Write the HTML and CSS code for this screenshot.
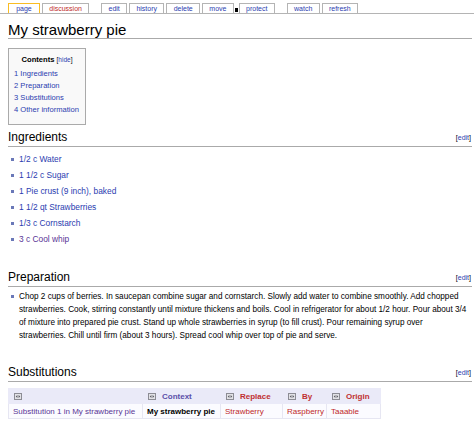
FILE: index.html
```html
<!DOCTYPE html>
<html lang="en">
<head>
    <meta charset="UTF-8">
    <title>My strawberry pie</title>
    <link rel="stylesheet" href="styles.css">
</head>
<body>
    <ul class="tabs">
        <li class="tab selected"><a href="#">page</a></li>
        <li class="tab gap"><a href="#" class="new">discussion</a></li>
        <li class="tab"><a href="#">edit</a></li>
        <li class="tab"><a href="#">history</a></li>
        <li class="tab"><a href="#">delete</a></li>
        <li class="tab"><a href="#">move</a></li>
        <li class="tab-mark"></li>
        <li class="tab gap"><a href="#">protect</a></li>
        <li class="tab"><a href="#">watch</a></li>
        <li class="tab"><a href="#">refresh</a></li>
    </ul>
    <div class="content">
        <h1>My strawberry pie</h1>
        <div class="toc">
            <div class="toc-title">Contents <span class="toc-toggle">[<a href="#">hide</a>]</span></div>
            <ul>
                <li><a href="#ingredients">1 Ingredients</a></li>
                <li><a href="#preparation">2 Preparation</a></li>
                <li><a href="#substitutions">3 Substitutions</a></li>
                <li><a href="#other">4 Other information</a></li>
            </ul>
        </div>

        <h2 id="ingredients" class="first"><span class="editsection">[<a href="#">edit</a>]</span>Ingredients</h2>
        <ul class="items">
            <li><a href="#">1/2 c Water</a></li>
            <li><a href="#">1 1/2 c Sugar</a></li>
            <li><a href="#">1 Pie crust (9 inch), baked</a></li>
            <li><a href="#">1 1/2 qt Strawberries</a></li>
            <li><a href="#">1/3 c Cornstarch</a></li>
            <li><a href="#" class="visited">3 c Cool whip</a></li>
        </ul>

        <h2 id="preparation"><span class="editsection">[<a href="#">edit</a>]</span>Preparation</h2>
        <ul class="steps">
            <li>Chop 2 cups of berries. In saucepan combine sugar and cornstarch. Slowly add water to combine smoothly. Add chopped strawberries. Cook, stirring constantly until mixture thickens and boils. Cool in refrigerator for about 1/2 hour. Pour about 3/4 of mixture into prepared pie crust. Stand up whole strawberries in syrup (to fill crust). Pour remaining syrup over strawberries. Chill until firm (about 3 hours). Spread cool whip over top of pie and serve.</li>
        </ul>

        <h2 id="substitutions"><span class="editsection">[<a href="#">edit</a>]</span>Substitutions</h2>
        <table class="subs">
            <colgroup>
                <col class="c1"><col class="c2"><col class="c3"><col class="c4"><col class="c5">
            </colgroup>
            <thead>
                <tr>
                    <th><svg class="sort" width="8" height="7" viewBox="0 0 8 7"><rect x="0.5" y="0.5" width="7" height="6" fill="#e2e2e6" stroke="#8c8c94"/><path d="M1.8 3.5l1.6-1.5v3zM6.2 3.5l-1.6-1.5v3z" fill="#55555c"/></svg></th>
                    <th><svg class="sort" width="8" height="7" viewBox="0 0 8 7"><rect x="0.5" y="0.5" width="7" height="6" fill="#e2e2e6" stroke="#8c8c94"/><path d="M1.8 3.5l1.6-1.5v3zM6.2 3.5l-1.6-1.5v3z" fill="#55555c"/></svg><span class="h-link">Context</span></th>
                    <th><svg class="sort" width="8" height="7" viewBox="0 0 8 7"><rect x="0.5" y="0.5" width="7" height="6" fill="#e2e2e6" stroke="#8c8c94"/><path d="M1.8 3.5l1.6-1.5v3zM6.2 3.5l-1.6-1.5v3z" fill="#55555c"/></svg><span class="h-new">Replace</span></th>
                    <th><svg class="sort" width="8" height="7" viewBox="0 0 8 7"><rect x="0.5" y="0.5" width="7" height="6" fill="#e2e2e6" stroke="#8c8c94"/><path d="M1.8 3.5l1.6-1.5v3zM6.2 3.5l-1.6-1.5v3z" fill="#55555c"/></svg><span class="h-new">By</span></th>
                    <th><svg class="sort" width="8" height="7" viewBox="0 0 8 7"><rect x="0.5" y="0.5" width="7" height="6" fill="#e2e2e6" stroke="#8c8c94"/><path d="M1.8 3.5l1.6-1.5v3zM6.2 3.5l-1.6-1.5v3z" fill="#55555c"/></svg><span class="h-new">Origin</span></th>
                </tr>
            </thead>
            <tbody>
                <tr>
                    <td><a href="#" class="visited">Substitution 1 in My strawberry pie</a></td>
                    <td><strong>My strawberry pie</strong></td>
                    <td><a href="#" class="new">Strawberry</a></td>
                    <td><a href="#" class="new">Raspberry</a></td>
                    <td><a href="#" class="new">Taaable</a></td>
                </tr>
            </tbody>
        </table>
    </div>
</body>
</html>
```

FILE: styles.css
```css
body {
    margin: 0;
    font-family: "Liberation Sans", Arial, sans-serif;
    color: #000000;
    background-color: #ffffff;
}
a {
    color: #2b3db0;
    text-decoration: none;
}
a.visited {
    color: #5a3696;
}
a.new {
    color: #c02a2a;
}
.tabs {
    display: flex;
    align-items: flex-end;
    height: 13px;
    margin: 0;
    padding: 0 0 0 8px;
    list-style: none;
    border-bottom: 1px solid #b4b4b4;
}
.tab {
    height: 10px;
    box-sizing: border-box;
    padding: 0 6.3px;
    margin-right: 2px;
    border: 1px solid #b4b4b4;
    border-bottom: none;
    background-color: #ffffff;
    font-size: 7px;
    line-height: 10px;
}
.tab.selected {
    padding: 0 7.2px;
    border-color: #fabd23;
}
.tab.gap {
    margin-right: 12px;
}
.tab-mark {
    width: 3px;
    height: 4px;
    margin: 0 1px 1px -1px;
    background-color: #000000;
}
.content {
    padding: 0 2px 0 8px;
}
h1 {
    margin: 7px 0 0;
    font-size: 15px;
    font-weight: normal;
    line-height: 17px;
    border-bottom: 1px solid #aaaaaa;
}
.toc {
    width: 78px;
    box-sizing: border-box;
    margin-top: 9px;
    padding: 5px 5px 8px;
    border: 1px solid #aaaaaa;
    background-color: #f9f9f9;
    font-size: 7.6px;
    line-height: 12px;
    white-space: nowrap;
}
.toc-title {
    margin-bottom: 2px;
    text-align: center;
    font-weight: bold;
}
.toc-toggle {
    font-weight: normal;
    font-size: 6.5px;
}
.toc ul {
    margin: 0;
    padding: 0;
    list-style: none;
}
h2 {
    margin: 23px 0 0;
    padding-bottom: 1px;
    font-size: 12px;
    font-weight: normal;
    line-height: 15px;
    border-bottom: 1px solid #aaaaaa;
}
h2.first {
    margin-top: 5px;
}
.editsection {
    float: right;
    font-size: 7px;
    line-height: 15px;
    margin-right: 1px;
}
.items, .steps {
    margin: 4px 0 0;
    padding: 0;
    list-style: none;
    font-size: 8.4px;
}
.items li, .steps li {
    display: flex;
}
.items li::before, .steps li::before {
    content: "";
    flex: none;
    width: 3px;
    height: 3px;
    margin: 6.5px 5px 0 3px;
    background-color: #6a78b8;
}
.items li {
    line-height: 16px;
}
.steps {
    margin-top: 3px;
    padding-right: 4px;
    font-size: 8.2px;
}
.steps li {
    line-height: 13px;
}
.steps li::before {
    margin-top: 5px;
}
.subs {
    margin-top: 6px;
    width: 372px;
    table-layout: fixed;
    border-collapse: collapse;
    font-size: 8px;
    background-color: #fbfbff;
}
.subs .c1 { width: 134px; }
.subs .c2 { width: 78px; }
.subs .c3 { width: 62px; }
.subs .c4 { width: 44px; }
.subs .c5 { width: 54px; }
.subs th {
    height: 14px;
    padding: 0 4px;
    text-align: left;
    background-color: #eaeaf8;
    border: 1px solid #eaeaf8;
    white-space: nowrap;
}
.subs td {
    height: 14px;
    padding: 0 4px;
    border: 1px solid #e6e6f2;
    white-space: nowrap;
    overflow: hidden;
}
.sort {
    vertical-align: -1px;
    margin: 0 6px 0 1px;
}
.h-link {
    color: #5a4fa8;
}
.h-new {
    color: #c03030;
}
```
